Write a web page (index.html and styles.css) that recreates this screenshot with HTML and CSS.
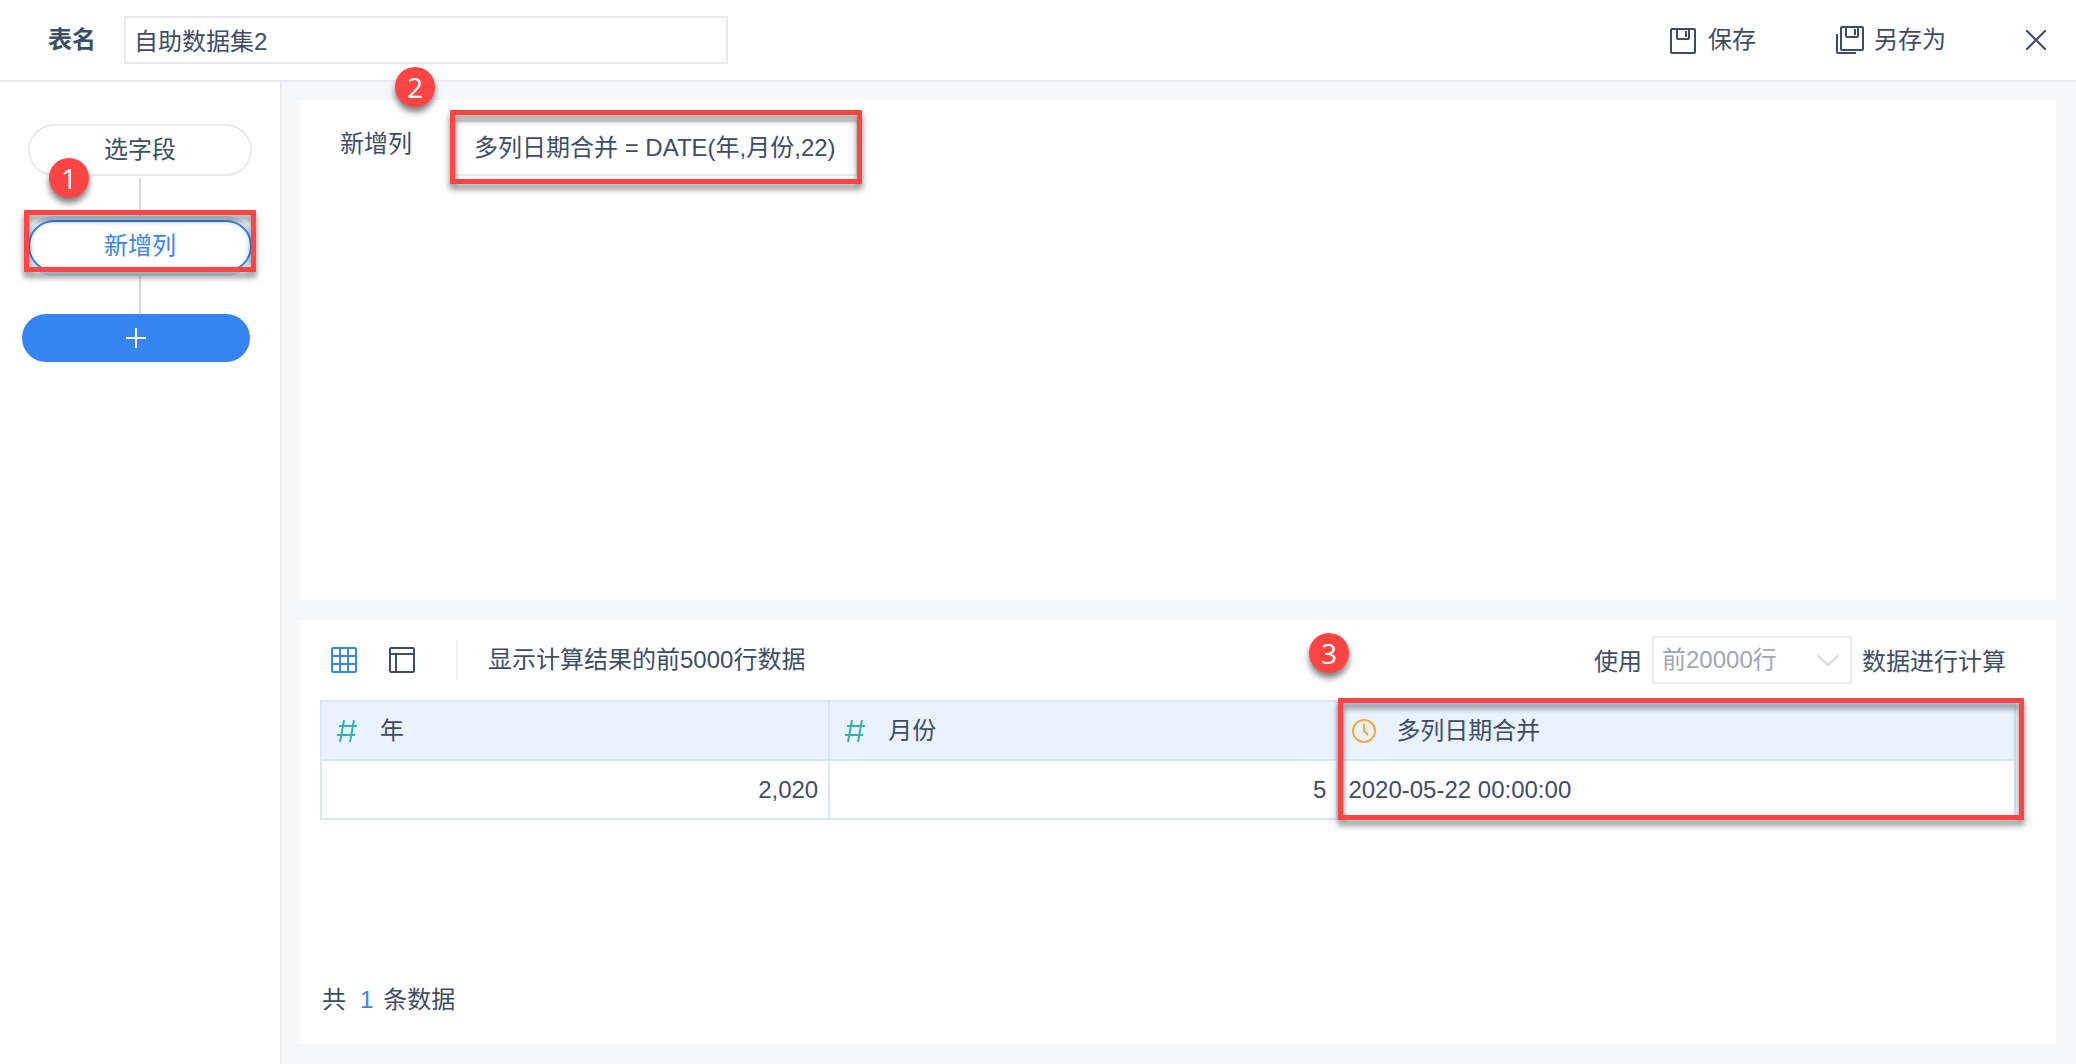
FILE: index.html
```html
<!DOCTYPE html>
<html lang="zh-CN">
<head>
<meta charset="utf-8">
<title>自助数据集2</title>
<link rel="stylesheet" href="styles.css">
</head>
<body>
<header class="topbar">
  <label class="topbar-label" for="table-name">表名</label>
  <input class="name-input" id="table-name" type="text" value="自助数据集2">
  <div class="topbar-actions">
    <button class="action" type="button">
      <svg class="icon-save" width="26" height="26" viewBox="0 0 26 26" fill="none" stroke="currentColor" stroke-width="2"><rect x="1" y="1" width="24" height="24" rx="1"/><path d="M7 1v9q0 1 1 1h10q1 0 1-1V1M16 3v6"/></svg>
      <span>保存</span>
    </button>
    <button class="action" type="button">
      <svg width="28" height="28" viewBox="0 0 28 28" fill="none" stroke="currentColor" stroke-width="2"><rect x="5" y="1" width="22" height="23" rx="1"/><path d="M10 1v9q0 1 1 1h10q1 0 1-1V1M19 3v6M1 8v18q0 1 1 1h18"/></svg>
      <span>另存为</span>
    </button>
    <button class="close" type="button" aria-label="关闭">
      <svg width="20" height="20" viewBox="0 0 20 20" fill="none" stroke="currentColor" stroke-width="2"><path d="M0 0l20 20M20 0L0 20"/></svg>
    </button>
  </div>
</header>
<div class="workspace">
  <nav class="steps">
    <div class="step-wrap">
      <button class="step" type="button">选字段</button>
      <span class="badge badge-one">1</span>
    </div>
    <span class="link"></span>
    <div class="step-wrap">
      <button class="step step-active" type="button">新增列</button>
      <span class="mark mark-step"></span>
    </div>
    <span class="link"></span>
    <button class="add-step" type="button" aria-label="添加步骤">
      <svg width="20" height="20" viewBox="0 0 20 20" fill="none" stroke="currentColor" stroke-width="2"><path d="M10 0v20M0 10h20"/></svg>
    </button>
  </nav>
  <main class="content">
    <section class="panel editor">
      <span class="editor-label">新增列</span>
      <div class="formula-wrap">
        <button class="formula" type="button">多列日期合并 = DATE(年,月份,22)</button>
        <span class="mark mark-formula"></span>
        <span class="badge badge-two">2</span>
      </div>
    </section>
    <section class="panel preview">
      <div class="toolbar">
        <button class="view view-active" type="button" aria-label="表格视图">
          <svg width="26" height="26" viewBox="0 0 26 26" fill="none" stroke="currentColor" stroke-width="2"><rect x="1" y="1" width="24" height="24" rx="1"/><path d="M9 1v24M17 1v24M1 9h24M1 17h24"/></svg>
        </button>
        <button class="view" type="button" aria-label="结构视图">
          <svg width="26" height="26" viewBox="0 0 26 26" fill="none" stroke="currentColor" stroke-width="2"><rect x="1" y="1" width="24" height="24" rx="1"/><path d="M1 7h24M7 7v18"/></svg>
        </button>
        <span class="divider"></span>
        <span class="toolbar-note">显示计算结果的前5000行数据</span>
        <div class="row-limit">
          <label class="limit-text" for="row-limit">使用</label>
          <div class="select-wrap">
            <select class="select" id="row-limit"><option>前20000行</option></select>
            <svg class="chevron" width="22" height="12" viewBox="0 0 22 12" fill="none" stroke="currentColor" stroke-width="2"><path d="M0 1l11 10L22 1"/></svg>
          </div>
          <span class="limit-text">数据进行计算</span>
        </div>
      </div>
      <div class="table-wrap">
        <table class="grid">
          <colgroup><col class="col-year"><col class="col-month"><col></colgroup>
          <thead>
            <tr>
              <th><span class="head"><svg class="num" width="24" height="24" viewBox="0 0 24 24" fill="none" stroke="currentColor" stroke-width="2"><path d="M8 1L4 23M18 1l-4 22M3 7h18M1 16h18"/></svg>年</span></th>
              <th><span class="head"><svg class="num" width="24" height="24" viewBox="0 0 24 24" fill="none" stroke="currentColor" stroke-width="2"><path d="M8 1L4 23M18 1l-4 22M3 7h18M1 16h18"/></svg>月份</span></th>
              <th><span class="head"><svg class="date" width="24" height="24" viewBox="0 0 24 24" fill="none" stroke="currentColor" stroke-width="2"><circle cx="12" cy="12" r="11"/><path d="M12 5v7l4 4"/></svg>多列日期合并</span></th>
            </tr>
          </thead>
          <tbody>
            <tr><td class="number">2,020</td><td class="number">5</td><td>2020-05-22 00:00:00</td></tr>
          </tbody>
        </table>
        <span class="mark mark-column"></span>
        <span class="badge badge-three">3</span>
      </div>
      <p class="total"><span>共</span><span class="count">1</span><span>条数据</span></p>
    </section>
  </main>
</div>
</body>
</html>
```
FILE: styles.css
```css
* { box-sizing: border-box; }

body {
  margin: 0;
  min-height: 100vh;
  display: flex;
  flex-direction: column;
  background: #fff;
  color: #3d4d66;
  font: 24px/32px "Liberation Sans", "Noto Sans CJK SC", sans-serif;
}

button, input, select { font: inherit; color: inherit; }
button { padding: 0; border: 0; background: none; }
svg { display: block; flex: none; }

.topbar {
  display: flex;
  align-items: center;
  height: 82px;
  padding: 0 30px 0 48px;
  border-bottom: 2px solid #e9eaee;
}
.topbar-label { font-weight: 700; }
.name-input {
  width: 604px;
  height: 48px;
  margin-left: 28px;
  padding: 0 8px 2px;
  border: 2px solid #e9eaef;
  background: #fff;
}
.topbar-actions { display: flex; align-items: center; margin-left: auto; gap: 80px; }
.action { display: flex; align-items: center; gap: 10px; }
.icon-save { margin: 2px 2px 0 0; }

.workspace { display: flex; flex: 1; }

.steps {
  flex: none;
  width: 282px;
  padding: 42px 28px 0;
  border-right: 2px solid #e9eaee;
  display: flex;
  flex-direction: column;
}
.step-wrap { position: relative; display: flex; }
.step {
  flex: 1;
  height: 52px;
  border: 2px solid #e9eaee;
  border-radius: 26px;
  background: #fff;
}
.step-active { border-color: #3685f2; color: #3685f2; box-shadow: 0 0 0 4px #dde8f9; }
.link { width: 2px; height: 40px; margin: 2px auto; background: #d4d8dd; }
.add-step {
  display: flex;
  align-items: center;
  justify-content: center;
  width: 228px;
  height: 48px;
  margin: -2px 0 0 -6px;
  border-radius: 24px;
  background: #3685f2;
  color: #fff;
}

.content {
  flex: 1;
  display: grid;
  grid-template-rows: 500fr 424fr;
  gap: 20px;
  padding: 18px 20px 20px 18px;
  background: #f6f7f9;
}
.panel { background: #fff; }

.editor { display: flex; align-items: flex-start; padding: 20px 40px; }
.editor-label { margin-top: 8px; }
.formula-wrap { position: relative; margin-left: 40px; }
.formula {
  display: block;
  height: 56px;
  padding: 0 20px;
  border: 2px solid #e9eaee;
  white-space: nowrap;
}

.preview { display: flex; flex-direction: column; padding: 16px 40px 28px 20px; }
.toolbar { display: flex; align-items: center; height: 48px; padding: 0 10px 0 11px; }
.view { margin-right: 32px; }
.view-active { color: #3685f2; }
.divider { width: 2px; height: 40px; margin: 0 30px 0 9px; background: #eff0f4; }
.row-limit { display: flex; align-items: center; gap: 10px; margin-left: auto; }
.limit-text { padding-top: 4px; }
.select-wrap { position: relative; }
.select {
  display: block;
  appearance: none;
  width: 200px;
  height: 48px;
  padding: 0 8px;
  border: 2px solid #e9eaef;
  border-radius: 4px;
  background: #fff;
  color: #a0a6b5;
}
.chevron { position: absolute; right: 13px; top: 18px; color: #d4d8e0; pointer-events: none; }

.table-wrap { position: relative; margin-top: 16px; }
.grid { width: 100%; table-layout: fixed; border-collapse: collapse; }
.col-year, .col-month { width: 30%; }
.grid th, .grid td {
  height: 59px;
  padding: 0 10px;
  border: 2px solid #d6e7fb;
  font-weight: 400;
  text-align: left;
}
.grid th { background: #eaf2fe; }
.grid .number { text-align: right; }
.head { display: flex; align-items: center; gap: 20px; padding-left: 4px; }
.num { color: #32b5a5; }
.date { color: #fba83c; }

.total { display: flex; margin: auto 0 0 2px; }
.count { margin: 0 10px 0 14px; color: #3685f2; }

.mark {
  position: absolute;
  border: 5px solid #ff4444;
  filter: drop-shadow(0 5px 3px rgba(0, 0, 0, 0.5));
  pointer-events: none;
}
.mark-step { inset: -10px -4px 0; }
.mark-formula { inset: -10px -4px -8px -2px; }
.mark-column { top: -2px; bottom: 0; left: 60%; right: -8px; }
.badge {
  position: absolute;
  width: 40px;
  height: 40px;
  border-radius: 50%;
  background: #ff4444;
  color: #fff;
  font: 28px/40px "Noto Sans", sans-serif;
  text-align: center;
  filter: drop-shadow(0 5px 3px rgba(0, 0, 0, 0.5));
}
.badge-one { left: 21px; top: 34px; }
.badge-two { left: -57px; top: -53px; }
.badge-three { left: 989px; top: -67px; }
```
